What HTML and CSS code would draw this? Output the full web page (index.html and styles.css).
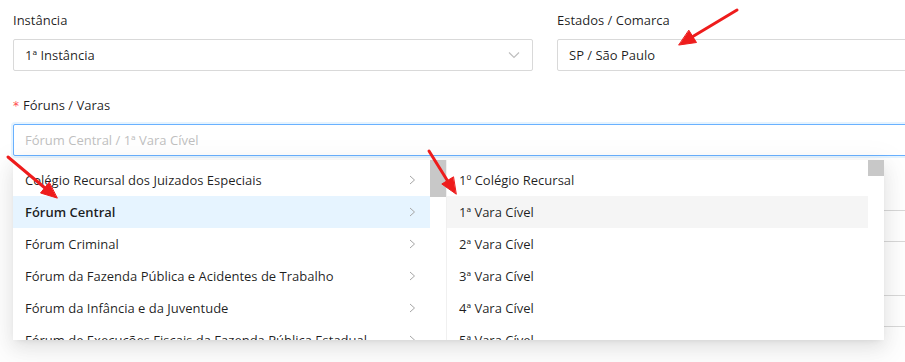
FILE: index.html
```html
<!DOCTYPE html>
<html lang="pt-BR">
<head>
<meta charset="utf-8">
<title>Fóruns / Varas</title>
<link rel="stylesheet" href="styles.css">
</head>
<body>
<form class="form">
  <div class="field">
    <label class="label">Instância</label>
    <div class="select">
      <span class="value">1ª Instância</span>
      <svg class="chev-down" width="12" height="8" viewBox="0 0 12 8"><path d="M1 1.5 L6 6.5 L11 1.5" fill="none" stroke="#bfbfbf" stroke-width="1.2"/></svg>
    </div>
  </div>
  <div class="field">
    <label class="label">Estados / Comarca</label>
    <div class="select"><span class="value">SP / São Paulo</span></div>
  </div>

  <div class="field wide">
    <label class="label"><span class="req">*</span>Fóruns / Varas</label>
    <div class="cascader">
      <div class="select focused"><span class="placeholder">Fórum Central / 1ª Vara Cível</span></div>
      <div class="dropdown">
        <div class="menu menu-left">
          <ul class="list">
            <li class="item">Colégio Recursal dos Juizados Especiais<svg class="chev" width="7" height="10" viewBox="0 0 7 10"><path d="M1 1 L5.5 5 L1 9" fill="none" stroke="#a6a6a6" stroke-width="1"/></svg></li>
            <li class="item active">Fórum Central<svg class="chev" width="7" height="10" viewBox="0 0 7 10"><path d="M1 1 L5.5 5 L1 9" fill="none" stroke="#a6a6a6" stroke-width="1"/></svg></li>
            <li class="item">Fórum Criminal<svg class="chev" width="7" height="10" viewBox="0 0 7 10"><path d="M1 1 L5.5 5 L1 9" fill="none" stroke="#a6a6a6" stroke-width="1"/></svg></li>
            <li class="item">Fórum da Fazenda Pública e Acidentes de Trabalho<svg class="chev" width="7" height="10" viewBox="0 0 7 10"><path d="M1 1 L5.5 5 L1 9" fill="none" stroke="#a6a6a6" stroke-width="1"/></svg></li>
            <li class="item">Fórum da Infância e da Juventude<svg class="chev" width="7" height="10" viewBox="0 0 7 10"><path d="M1 1 L5.5 5 L1 9" fill="none" stroke="#a6a6a6" stroke-width="1"/></svg></li>
            <li class="item">Fórum de Execuções Fiscais da Fazenda Pública Estadual<svg class="chev" width="7" height="10" viewBox="0 0 7 10"><path d="M1 1 L5.5 5 L1 9" fill="none" stroke="#a6a6a6" stroke-width="1"/></svg></li>
          </ul>
          <div class="scrollbar"><div class="thumb thumb-left"></div></div>
        </div>
        <div class="menu menu-right">
          <ul class="list">
            <li class="item">1º Colégio Recursal</li>
            <li class="item hover">1ª Vara Cível</li>
            <li class="item">2ª Vara Cível</li>
            <li class="item">3ª Vara Cível</li>
            <li class="item">4ª Vara Cível</li>
            <li class="item">5ª Vara Cível</li>
          </ul>
          <div class="scrollbar"><div class="thumb thumb-right"></div></div>
        </div>
      </div>
    </div>
  </div>

  <div class="field">
    <label class="label">&nbsp;</label>
    <div class="select"></div>
  </div>
  <div class="field">
    <label class="label">&nbsp;</label>
    <div class="select"></div>
  </div>
  <div class="field">
    <label class="label">&nbsp;</label>
    <div class="select"></div>
  </div>
  <div class="field">
    <label class="label">&nbsp;</label>
    <div class="select"></div>
  </div>
</form>

<svg class="annotations" width="905" height="362" viewBox="0 0 905 362">
  <g stroke="#ee1c1c" stroke-width="3" stroke-linecap="round" fill="#ee1c1c">
    <line x1="737" y1="10" x2="692" y2="37"/>
    <polygon points="679,45 696.5,42.5 689,30.5" stroke-width="1"/>
    <line x1="8" y1="157" x2="45" y2="188"/>
    <polygon points="57,198 40.5,193 49,182.5" stroke-width="1"/>
    <line x1="429" y1="151" x2="447" y2="180"/>
    <polygon points="456,194 441.8,184 453.2,177" stroke-width="1"/>
  </g>
</svg>
</body>
</html>
```

FILE: styles.css
```css
html, body {
  margin: 0;
  padding: 0;
  width: 905px;
  height: 362px;
  overflow: hidden;
  background: #ffffff;
}

body {
  position: relative;
  font-family: "Open Sans", "Noto Sans", sans-serif;
  font-size: 13px;
  color: rgba(0, 0, 0, 0.88);
}

.form {
  display: grid;
  grid-template-columns: 520px 520px;
  column-gap: 24px;
  row-gap: 23px;
  padding: 9px 0 0 13px;
  width: 1200px;
}

.field {
  display: flex;
  flex-direction: column;
}

.field.wide {
  grid-column: 1 / -1;
  margin-bottom: 1px;
}

.label {
  height: 22px;
  line-height: 22px;
  padding-bottom: 8px;
  color: rgba(0, 0, 0, 0.88);
}

.req {
  color: #ff4d4f;
  margin-right: 4px;
  font-family: "DejaVu Sans", sans-serif;
  font-size: 12px;
}

.select {
  box-sizing: border-box;
  height: 32px;
  border: 1px solid #d9d9d9;
  border-radius: 2px;
  padding: 0 11px;
  display: flex;
  align-items: center;
  justify-content: space-between;
  background: #fff;
}

.value {
  color: rgba(0, 0, 0, 0.88);
}

.placeholder {
  color: #bfbfbf;
}

.chev-down {
  display: block;
  margin-right: 1px;
}

.cascader {
  position: relative;
}

.select.focused {
  border-color: #69b1ff;
  box-shadow: 0 0 0 2px rgba(5, 145, 255, 0.1);
}

.dropdown {
  position: absolute;
  top: calc(100% + 4px);
  left: 0;
  z-index: 10;
  display: flex;
  background: #fff;
  box-shadow: 0 6px 16px 0 rgba(0, 0, 0, 0.08), 0 3px 6px -4px rgba(0, 0, 0, 0.12), 0 9px 28px 8px rgba(0, 0, 0, 0.05);
}

.menu {
  display: flex;
  height: 180px;
  overflow: hidden;
}

.menu-left {
  width: 433px;
}

.menu-right {
  width: 437px;
  border-left: 1px solid #f0f0f0;
}

.list {
  list-style: none;
  margin: 0;
  padding: 4px 0 0;
  flex: 1;
}

.item {
  height: 32px;
  box-sizing: border-box;
  padding: 5px 14px 5px 12px;
  line-height: 22px;
  display: flex;
  align-items: center;
  justify-content: space-between;
  white-space: nowrap;
  color: rgba(0, 0, 0, 0.88);
}

.item.active {
  background: #e6f4ff;
  font-weight: 600;
}

.item.hover {
  background: #f5f5f5;
}

.chev {
  display: block;
  flex-shrink: 0;
}

.scrollbar {
  width: 16px;
  flex-shrink: 0;
  background: #fff;
}

.thumb {
  background: #c8c8c8;
}

.thumb-left {
  height: 37px;
}

.thumb-right {
  height: 16px;
}

.annotations {
  position: absolute;
  left: 0;
  top: 0;
  z-index: 20;
  pointer-events: none;
}
```
